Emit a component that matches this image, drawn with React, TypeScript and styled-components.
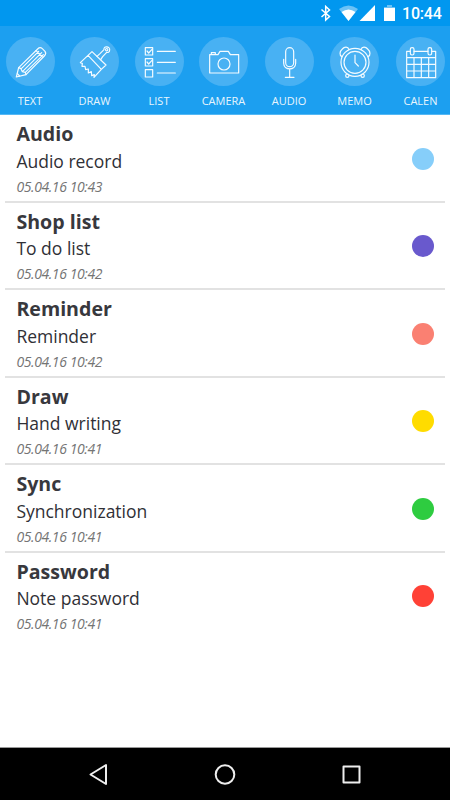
import React from "react";
import styled, { createGlobalStyle } from "styled-components";

const GlobalStyle = createGlobalStyle`
  * { box-sizing: border-box; }
  body { margin: 0; background: #fff; }
`;

const Screen = styled.div`
  width: 450px;
  height: 800px;
  display: flex;
  flex-direction: column;
  overflow: hidden;
  background: #fff;
  font-family: "Open Sans", "Noto Sans", sans-serif;
`;

const StatusBar = styled.header`
  height: 26px;
  flex: none;
  display: flex;
  align-items: center;
  justify-content: flex-end;
  padding-right: 8px;
  background: #0197ef;
`;

const StatusIcons = styled.svg`
  display: block;
  width: 80px;
  height: 26px;
  overflow: visible;
`;

const Clock = styled.span`
  width: 40px;
  padding-top: 2px;
  font: 500 16px/24px Roboto, sans-serif;
  letter-spacing: -0.2px;
  color: #fff;
  white-space: nowrap;
`;

const Toolbar = styled.nav`
  height: 89px;
  flex: none;
  display: grid;
  grid-template-columns: 64.5px 64.5px 64.5px 65.5px 65.5px 66px 54px;
  padding: 11px 0 0 5.5px;
  background: #1c9ff0;
  border-bottom: 1px solid #55b8f4;
`;

const Tool = styled.button`
  width: 49px;
  height: 77px;
  padding: 0;
  border: 0;
  background: none;
  display: flex;
  flex-direction: column;
  align-items: center;
  color: #e8f5fd;
`;

const ToolIcon = styled.svg`
  display: block;
  flex: none;
  width: 49px;
  height: 49px;
  border-radius: 50%;
  background: #48b1f3;
  fill: none;
  stroke: #f4fbff;
  stroke-width: 3.6;
  stroke-linejoin: round;
  stroke-linecap: round;
`;

const ToolLabel = styled.span`
  margin-top: 7px;
  font: 400 11px/16px "Open Sans", sans-serif;
  white-space: nowrap;
`;

const Notes = styled.main`
  flex: 1;
  min-height: 0;
`;

const Note = styled.article`
  height: 87.5px;
  margin: 0 5px;
  padding: 5.2px 11px 0 11.4px;
  display: flex;
  justify-content: space-between;
  border-bottom: 2px solid #e2e2e2;
  &:last-child { border-bottom: 0; }
`;

const Title = styled.h2`
  margin: 0;
  font-size: 19.6px;
  line-height: 27.6px;
  font-weight: 700;
  color: #38383d;
`;

const Summary = styled.p`
  margin: 0;
  font-size: 17.5px;
  line-height: 26px;
  color: #303036;
`;

const Stamp = styled.time`
  display: block;
  font-size: 14px;
  line-height: 25.4px;
  font-style: italic;
  letter-spacing: -0.4px;
  color: #747474;
`;

const Dot = styled.span<{ $color: string }>`
  width: 22px;
  height: 22px;
  margin-top: 27.8px;
  border-radius: 50%;
  background: ${(p) => p.$color};
`;

const NavBar = styled.footer`
  height: 53px;
  flex: none;
  display: flex;
  align-items: center;
  justify-content: space-between;
  padding: 0 87px;
  border-top: 1px solid #999;
  background: #000;
`;

const NavIcon = styled.svg`
  width: 24px;
  height: 24px;
  fill: none;
  stroke: #eee;
  stroke-width: 2;
  stroke-linejoin: round;
`;

const tools: { label: string; art: React.ReactNode }[] = [
  {
    label: "TEXT",
    art: (
      <>
        <path d="M31 120 38 92 95 36Q102 29 109 35L117 43Q122 50 115 57L60 113Z" />
        <path d="M38 92 45 95 49 104 58 106 60 113M46 95 98 43M50 103 107 47M58 106 112 53M90 41 110 60M34 110 41 117" />
      </>
    ),
  },
  {
    label: "DRAW",
    art: (
      <>
        <path d="M54 55 66 44 108 84 94 97ZM54 55 31 77 37 79 36 88 45 88 47 98 55 96 55 108 64 104 65 116 73 113 72 121 94 97" />
        <path d="M81 58 90 50 102 38C100 25 120 28 119 38 119 47 113 47 110 46L98 59 92 68" />
        <circle cx="110" cy="38" r="3.5" />
      </>
    ),
  },
  {
    label: "LIST",
    art: (
      <>
        <path d="M31 32H53V54H31ZM31 65H53V87H31ZM31 98H53V120H31Z" />
        <path d="M36 42 41 48 51 37M36 75 41 81 51 70M67 43H121M67 76H121M67 108H121" />
      </>
    ),
  },
  {
    label: "CAMERA",
    art: (
      <>
        <path d="M32 53H57L63 43H88L94 53H119V108H32ZM37 52V47H49V52" />
        <circle cx="75" cy="81" r="18" />
      </>
    ),
  },
  {
    label: "AUDIO",
    art: (
      <>
        <rect x="62" y="32" width="24" height="57" rx="12" />
        <path d="M56 67V79C56 101 92 101 92 79V67M74 96V121M61 121H87" />
      </>
    ),
  },
  {
    label: "MEMO",
    art: (
      <>
        <circle cx="75" cy="76" r="42" />
        <circle cx="75" cy="76" r="33" />
        <path d="M75 54V77L85 87M36 59C27 55 29 43 37 36 43 29 54 28 57 38M93 38C96 28 107 29 113 36 121 43 123 55 114 59" />
        <circle cx="52" cy="116" r="5" />
        <circle cx="98" cy="116" r="5" />
      </>
    ),
  },
  {
    label: "CALEN",
    art: (
      <>
        <path d="M43 43H32V122H119V43H107M54 43H96M32 62H119M32 82H119M32 102H119M54 62V122M76 62V122M98 62V122" />
        <rect x="43" y="32" width="11" height="22" rx="5" />
        <rect x="96" y="32" width="11" height="22" rx="5" />
      </>
    ),
  },
];

const notes = [
  { title: "Audio", text: "Audio record", time: "05.04.16 10:43", color: "#86cefa" },
  { title: "Shop list", text: "To do list", time: "05.04.16 10:42", color: "#6959cd" },
  { title: "Reminder", text: "Reminder", time: "05.04.16 10:42", color: "#fa8072" },
  { title: "Draw", text: "Hand writing", time: "05.04.16 10:41", color: "#ffdc00" },
  { title: "Sync", text: "Synchronization", time: "05.04.16 10:41", color: "#2ecc40" },
  { title: "Password", text: "Note password", time: "05.04.16 10:41", color: "#ff4136" },
];

export default function App() {
  return (
    <Screen>
      <GlobalStyle />
      <StatusBar>
        <StatusIcons viewBox="0 0 80 26">
          <path d="M-.5 9.5 7.5 16.5 3.7 20V6.5L7.5 10 -.5 17" fill="none" stroke="#fff" strokeWidth="1.5" />
          <path d="M17 9Q26.500 2 36 9L26.500 21Z" fill="#6bc2f6" />
          <path d="M19.500 12Q26.500 7 33.500 12L26.500 21Z" fill="#fff" />
          <path d="M53 5V21H37.500Z" fill="#fff" />
          <path d="M65 5H70V7H73V9H62V7H65Z" fill="#6bc2f6" />
          <path d="M62 8H73V21H62Z" fill="#fff" />
        </StatusIcons>
        <Clock>10:44</Clock>
      </StatusBar>
      <Toolbar>
        {tools.map((tool) => (
          <Tool key={tool.label}>
            <ToolIcon viewBox="0 0 147 147">{tool.art}</ToolIcon>
            <ToolLabel>{tool.label}</ToolLabel>
          </Tool>
        ))}
      </Toolbar>
      <Notes>
        {notes.map((note) => (
          <Note key={note.title}>
            <div>
              <Title>{note.title}</Title>
              <Summary>{note.text}</Summary>
              <Stamp>{note.time}</Stamp>
            </div>
            <Dot $color={note.color} />
          </Note>
        ))}
      </Notes>
      <NavBar>
        <NavIcon viewBox="0 0 24 24"><path d="M19 3V22L3.500 12.500Z" /></NavIcon>
        <NavIcon viewBox="0 0 24 24"><circle cx="12" cy="12.500" r="9.300" /></NavIcon>
        <NavIcon viewBox="0 0 24 24"><path d="M4.500 4.500H20.500V20.500H4.500Z" /></NavIcon>
      </NavBar>
    </Screen>
  );
}
